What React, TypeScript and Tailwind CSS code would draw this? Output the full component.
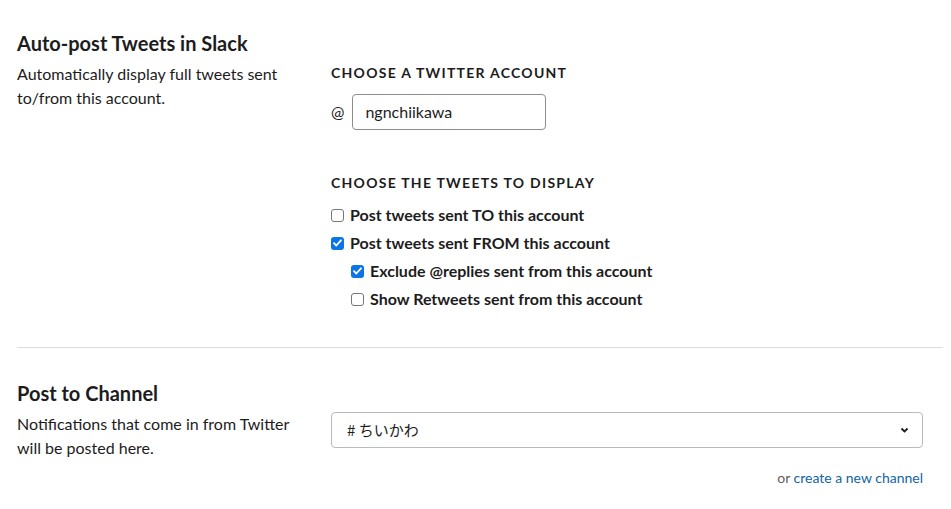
import React from "react";

function Box({ checked }: { checked?: boolean }) {
  if (checked) {
    return (
      <span className="flex h-[13px] w-[13px] shrink-0 items-center justify-center rounded-[3px] bg-[#0b75e6]">
        <svg width="9" height="8" viewBox="0 0 9 8">
          <path d="M1 4.2l2.3 2.3L8 1.3" fill="none" stroke="#fff" strokeWidth="1.8" strokeLinecap="round" strokeLinejoin="round" />
        </svg>
      </span>
    );
  }
  return <span className="h-[13px] w-[13px] shrink-0 rounded-[3px] border border-[#767676] bg-white" />;
}

function Check({ label, checked, indent }: { label: string; checked?: boolean; indent?: boolean }) {
  return (
    <label className={`flex h-[28px] items-center gap-[6px] ${indent ? "pl-[20px]" : ""}`}>
      <Box checked={checked} />
      <span className="text-[16px] font-bold text-[#1d1c1d]">{label}</span>
    </label>
  );
}

export default function App() {
  return (
    <main className="min-h-[509px] bg-white pl-[17px] pr-[8px] font-['Lato','Noto_Sans_CJK_JP',sans-serif] text-[#1d1c1d]">
      <section className="flex pt-[29px] pb-[34px]">
        <div className="w-[314px] shrink-0">
          <h2 className="text-[20px] font-bold leading-[28px]">Auto-post Tweets in Slack</h2>
          <p className="mt-[5px] w-[280px] text-[16px] leading-[24px]">
            Automatically display full tweets sent to/from this account.
          </p>
        </div>
        <div className="w-[592px] pt-[35px]">
          <h3 className="text-[14px] font-bold uppercase leading-[18px] tracking-[0.09em]">Choose a Twitter account</h3>
          <div className="mt-[12px] flex items-center gap-[8px]">
            <span className="text-[16px]">@</span>
            <div className="flex h-[36px] w-[194px] items-center rounded-[4px] border border-[#8d8d8d] px-[12px] text-[16px]">
              ngnchiikawa
            </div>
          </div>
          <h3 className="mt-[44px] text-[14px] font-bold uppercase leading-[18px] tracking-[0.09em]">Choose the tweets to display</h3>
          <div className="mt-[9px] flex flex-col">
            <Check label="Post tweets sent TO this account" />
            <Check label="Post tweets sent FROM this account" checked />
            <Check label="Exclude @replies sent from this account" checked indent />
            <Check label="Show Retweets sent from this account" indent />
          </div>
        </div>
      </section>
      <hr className="border-t border-[#dddddd]" />
      <section className="flex pt-[31px]">
        <div className="w-[314px] shrink-0">
          <h2 className="text-[20px] font-bold leading-[28px]">Post to Channel</h2>
          <p className="mt-[5px] w-[280px] text-[16px] leading-[24px]">
            Notifications that come in from Twitter will be posted here.
          </p>
        </div>
        <div className="w-[592px] pt-[33px]">
          <div className="flex h-[36px] items-center justify-between rounded-[4px] border border-[#bbbbbb] pl-[15px] pr-[13px] text-[15px]">
            <span className="font-['Noto_Sans_CJK_JP',sans-serif]"># ちいかわ</span>
            <svg width="9" height="6" viewBox="0 0 9 6">
              <path d="M1.5 1.5l3 3 3-3" fill="none" stroke="#1d1c1d" strokeWidth="1.8" />
            </svg>
          </div>
          <p className="mt-[20px] text-right text-[14px] leading-[20px] text-[#616061]">
            or <span className="text-[#1264a3]">create a new channel</span>
          </p>
        </div>
      </section>
    </main>
  );
}
